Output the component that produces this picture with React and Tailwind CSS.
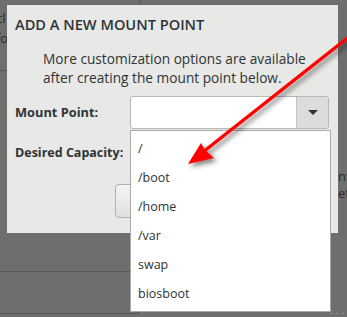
import React from "react";

const items = ["/", "/boot", "/home", "/var", "swap", "biosboot"];

const Arrow = () => (
  <svg
    className="absolute inset-0 z-20 pointer-events-none"
    width="347"
    height="317"
    viewBox="0 0 347 317"
  >
    <defs>
      <filter id="shadow" x="-20%" y="-20%" width="140%" height="140%">
        <feDropShadow dx="3" dy="3" stdDeviation="2.5" floodColor="#000" floodOpacity="0.5" />
      </filter>
    </defs>
    <g filter="url(#shadow)">
      <line x1="350" y1="36" x2="203" y2="152" stroke="#ff0000" strokeWidth="3.5" />
      <path d="M188 164 L201 143 L205 150 L214 158 Z" fill="#ff0000" />
    </g>
  </svg>
);

export default function App() {
  return (
    <div
      className="relative w-[347px] h-[317px] overflow-hidden bg-[#6e6e6e]"
      style={{ fontFamily: "'Open Sans', 'Liberation Sans', sans-serif" }}
    >
      {/* backdrop bits behind the dialog */}
      <div className="absolute left-[139px] top-0 h-[5px] w-px bg-[#5a5a5a]" />
      <div className="absolute left-0 top-[70px] h-px w-[7px] bg-[#595959]" />
      <div className="absolute left-[-4px] top-[8px] text-[13px] leading-[20px] text-[#2a2a2a]">
        <div>cl</div>
        <div>fo</div>
      </div>
      <div className="absolute left-[338px] top-[168px] text-[13px] leading-[17px] text-[#2a2a2a]">
        <div>nt</div>
        <div>et</div>
      </div>
      <div className="absolute left-0 top-[271px] h-px w-[130px] bg-[#575757]" />
      <div className="absolute left-[-10px] top-[290px] h-[24px] w-[150px] rounded-br-[4px] border-b border-r border-[#575757]" />
      <div className="absolute left-[330px] top-[313px] w-[20px] border-t border-dashed border-[#8a8a8a]" />

      {/* dialog */}
      <div className="relative ml-[7px] mt-[5px] flex h-[228px] w-[331px] flex-col bg-[#e8e8e7] text-[#2e3436]">
        <div className="pl-[8px] pt-[9px] text-[14.6px] font-semibold leading-[20px]">
          ADD A NEW MOUNT POINT
        </div>
        <div className="mt-[15px] pl-[36px] text-[13.7px] leading-[19px]">
          <div>More customization options are available</div>
          <div>after creating the mount point below.</div>
        </div>

        <div className="mt-[9px] flex items-center">
          <div className="w-[123px] pl-[8px] text-[12.8px] font-bold">Mount Point:</div>
          <div className="relative flex h-[33px] w-[199px] rounded-[3px] border border-[#b8b8b6] bg-white">
            <div className="flex-1" />
            <div className="flex w-[32px] items-center justify-center rounded-r-[3px] border-l border-[#c4c4c2] bg-[#dcdcdb]">
              <div className="h-0 w-0 border-l-[5px] border-r-[5px] border-t-[5px] border-l-transparent border-r-transparent border-t-[#2e3436]" />
            </div>

            <div className="absolute left-[-1px] top-[33px] z-10 flex w-[201px] flex-col border border-[#a9a9a9] bg-white py-[3px]">
              {items.map((it) => (
                <div key={it} className="h-[29px] pl-[7px] text-[12.5px] leading-[29px] text-[#2e3436]">
                  {it}
                </div>
              ))}
            </div>
          </div>
        </div>

        <div className="mt-[14px] pl-[8px] text-[12.5px] font-bold leading-[20px]">
          Desired Capacity:
        </div>

        <div className="mt-[21px] ml-[108px] h-[34px] w-[120px] rounded-[4px] border border-[#b0b0ae] bg-gradient-to-b from-[#f4f4f3] to-[#e0e0de]" />
      </div>

      <Arrow />
    </div>
  );
}
